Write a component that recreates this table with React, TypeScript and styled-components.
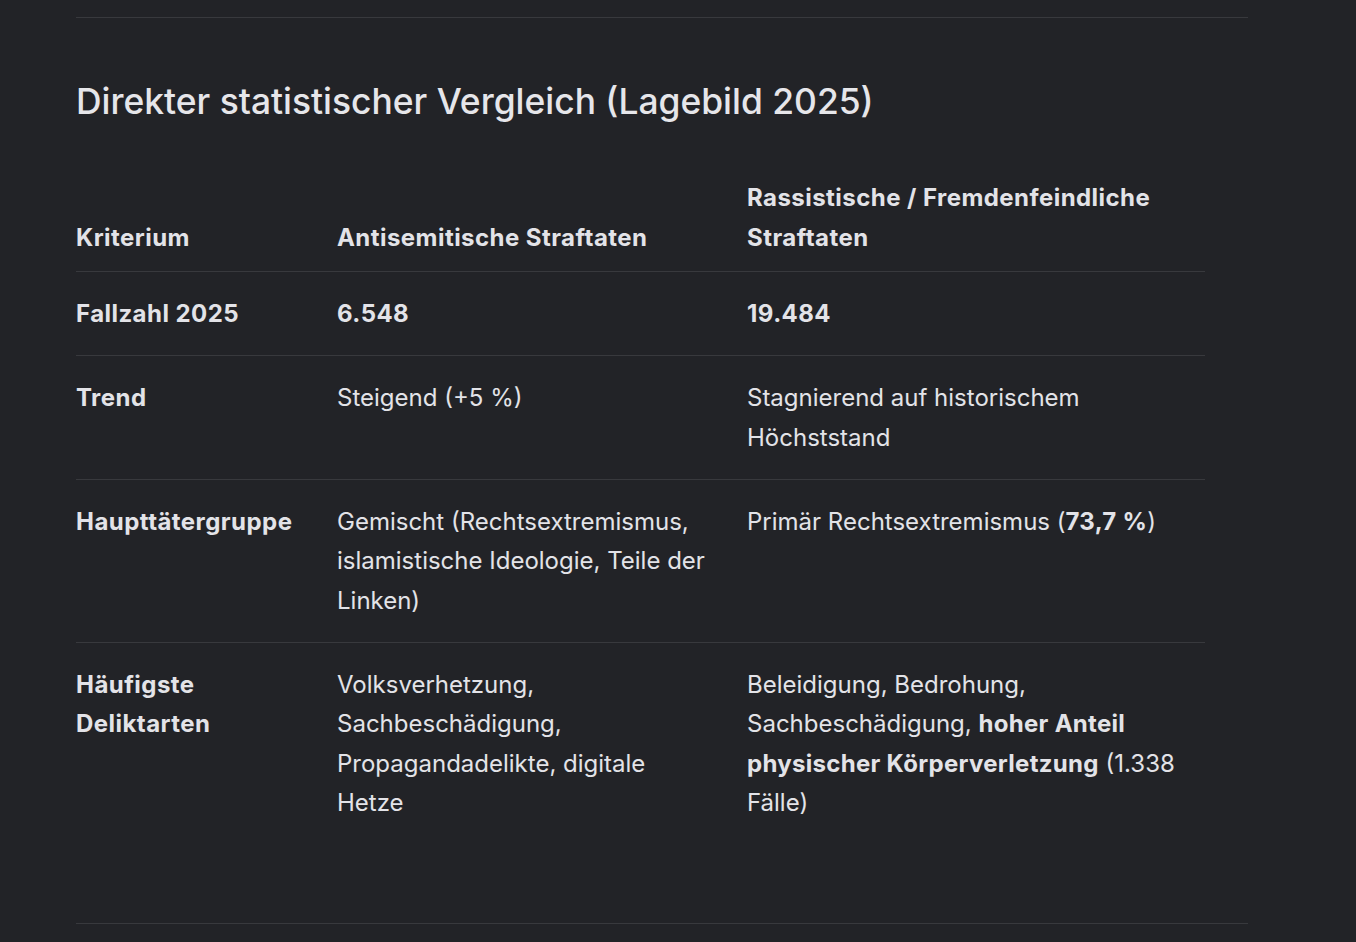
import React from "react";
import styled, { createGlobalStyle } from "styled-components";

const Global = createGlobalStyle`
  html, body { margin: 0; padding: 0; background: #222327; }
  body { font-family: Inter, "Noto Sans", sans-serif; color: #e3e3e8; }
`;

const Page = styled.div`
  width: 1172px;
  padding: 17px 0 0 76px;
  min-height: 942px;
  box-sizing: content-box;
`;

const Rule = styled.hr<{ $gap?: number }>`
  border: 0;
  height: 1px;
  background: #38393d;
  margin: ${(p) => p.$gap ?? 0}px 0 0 0;
`;

const Heading = styled.h2`
  font-size: 35.4px;
  font-weight: 500;
  line-height: 43px;
  margin: 62px 0 0 0;
  color: #e6e6ea;
`;

const Table = styled.table`
  width: 1129px;
  table-layout: fixed;
  border-collapse: collapse;
  margin-top: 40px;
  font-size: 24px;
  line-height: 39.5px;

  & tr > :nth-child(2) {
    padding-right: 36px;
  }
`;

const HeadCell = styled.th<{ $w: number }>`
  width: ${(p) => p.$w}px;
  text-align: left;
  vertical-align: bottom;
  font-weight: 700;
  letter-spacing: 0.45px;
  padding: 15px 20px 14px 0;
  border-bottom: 1px solid #38393d;
`;

const Row = styled.tr<{ $last?: boolean }>`
  border-bottom: ${(p) => (p.$last ? "none" : "1px solid #38393d")};
`;

const Cell = styled.td<{ $strong?: boolean }>`
  vertical-align: top;
  padding: 22px 20px 21.5px 0;
  font-weight: ${(p) => (p.$strong ? 700 : 400)};
  letter-spacing: ${(p) => (p.$strong ? "0.45px" : "0")};
`;

const B = styled.strong`
  font-weight: 700;
  letter-spacing: 0.3px;
`;

export default function App() {
  return (
    <>
      <Global />
      <Page>
        <Rule />
        <Heading>Direkter statistischer Vergleich (Lagebild 2025)</Heading>
        <Table>
          <thead>
            <tr>
              <HeadCell $w={241}>Kriterium</HeadCell>
              <HeadCell $w={374}>Antisemitische Straftaten</HeadCell>
              <HeadCell $w={438}>Rassistische / Fremdenfeindliche Straftaten</HeadCell>
            </tr>
          </thead>
          <tbody>
            <Row>
              <Cell $strong>Fallzahl 2025</Cell>
              <Cell $strong>6.548</Cell>
              <Cell $strong>19.484</Cell>
            </Row>
            <Row>
              <Cell $strong>Trend</Cell>
              <Cell>Steigend (+5 %)</Cell>
              <Cell>Stagnierend auf historischem Höchststand</Cell>
            </Row>
            <Row>
              <Cell $strong>Haupttätergruppe</Cell>
              <Cell>Gemischt (Rechtsextremismus, islamistische Ideologie, Teile der Linken)</Cell>
              <Cell>
                Primär Rechtsextremismus (<B>73,7 %</B>)
              </Cell>
            </Row>
            <Row $last>
              <Cell $strong>Häufigste Deliktarten</Cell>
              <Cell>Volksverhetzung, Sachbeschädigung, Propagandadelikte, digitale Hetze</Cell>
              <Cell>
                Beleidigung, Bedrohung, Sachbeschädigung, <B>hoher Anteil physischer Körperverletzung</B> (1.338 Fälle)
              </Cell>
            </Row>
          </tbody>
        </Table>
        <Rule $gap={79} />
      </Page>
    </>
  );
}
